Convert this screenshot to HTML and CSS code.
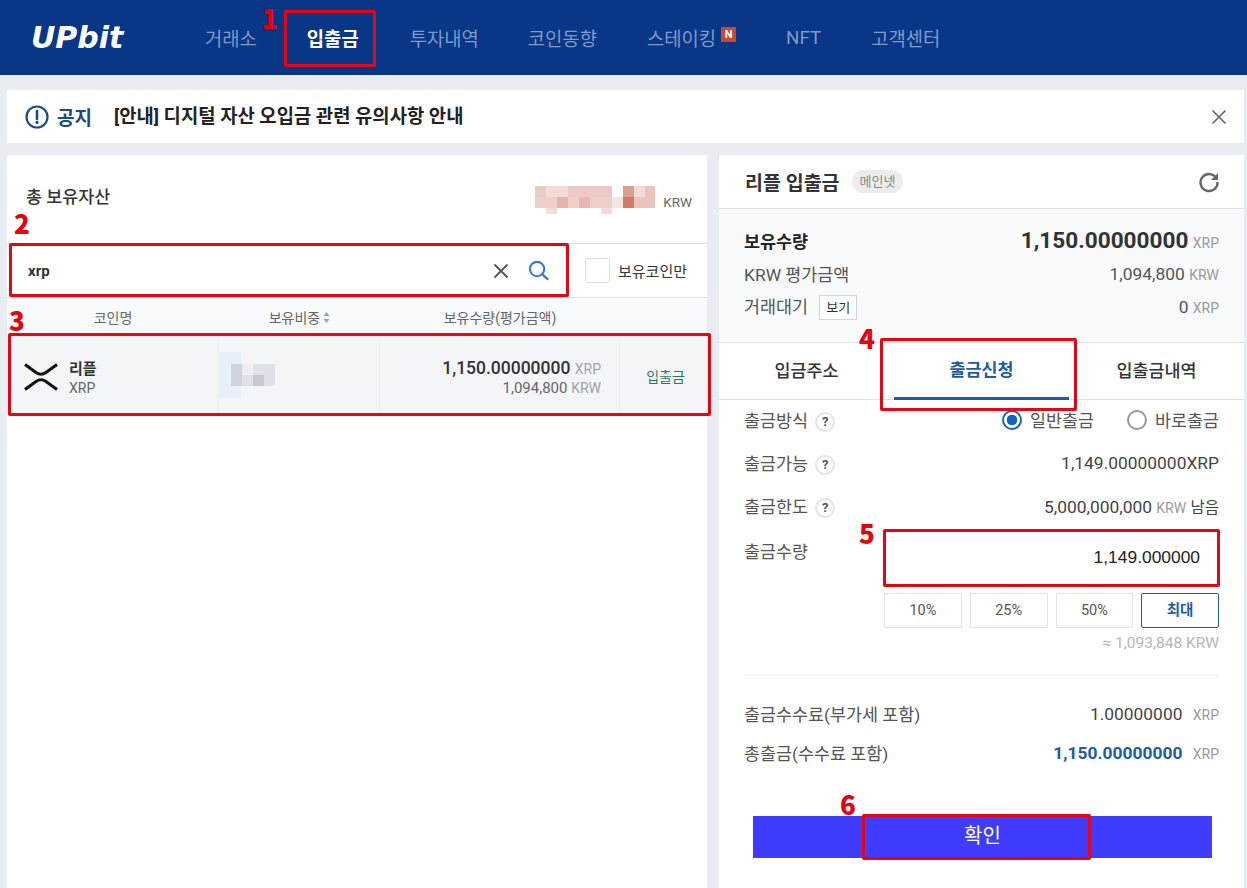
FILE: index.html
```html
<!DOCTYPE html>
<html lang="ko">
<head>
    <meta charset="UTF-8">
    <meta name="viewport" content="width=device-width, initial-scale=1.0">
    <title>업비트 출금신청</title>
    <link rel="stylesheet" href="styles.css">
</head>
<body>
    <header class="topbar">
        <div class="logo">UPbit</div>
        <nav class="nav">
            <a class="nav-item">거래소</a>
            <a class="nav-item nav-active">입출금</a>
            <a class="nav-item nav-history">투자내역</a>
            <a class="nav-item">코인동향</a>
            <a class="nav-item nav-staking">스테이킹<span class="new-badge">N</span></a>
            <a class="nav-item">NFT</a>
            <a class="nav-item">고객센터</a>
        </nav>
    </header>

    <main class="page">
        <section class="notice">
            <svg class="notice-icon" width="24" height="24" viewBox="0 0 24 24">
                <circle cx="12" cy="12" r="10.5" fill="none" stroke="#1d4a80" stroke-width="2.2"/>
                <path d="M12 6v8" stroke="#1d4a80" stroke-width="2.6" stroke-linecap="round"/>
                <circle cx="12" cy="17.4" r="1.6" fill="#1d4a80"/>
            </svg>
            <span class="notice-label">공지</span>
            <span class="notice-text">[안내] 디지털 자산 오입금 관련 유의사항 안내</span>
            <svg class="notice-close" width="16" height="16" viewBox="0 0 16 16">
                <path d="M1.5 1.5l13 13M14.5 1.5l-13 13" stroke="#666" stroke-width="1.6"/>
            </svg>
        </section>

        <div class="columns">
            <section class="panel left-panel">
                <div class="total-row">
                    <span class="total-title">총 보유자산</span>
                    <svg class="mosaic" width="120" height="28" viewBox="0 0 120 28">
                        <rect x="0" y="0" width="77" height="11" fill="#ecc9c4"/>
                        <rect x="11" y="0" width="22" height="11" fill="#f3dcd8"/>
                        <rect x="0" y="11" width="77" height="11" fill="#efcfca"/>
                        <rect x="22" y="11" width="11" height="11" fill="#e5b3ab"/>
                        <rect x="44" y="11" width="11" height="11" fill="#e6b8b0"/>
                        <rect x="77" y="11" width="11" height="11" fill="#f6e4e1"/>
                        <rect x="88" y="0" width="32" height="22" fill="#ecc4be"/>
                        <rect x="88" y="0" width="11" height="11" fill="#dd9c92"/>
                        <rect x="99" y="0" width="11" height="11" fill="#f3dcd8"/>
                        <rect x="88" y="11" width="11" height="11" fill="#cf7a6d"/>
                        <rect x="11" y="22" width="11" height="6" fill="#f3dcd8"/>
                        <rect x="66" y="22" width="11" height="6" fill="#f3dcd8"/>
                    </svg>
                    <span class="total-unit">KRW</span>
                </div>

                <div class="search-row">
                    <span class="search-text">xrp</span>
                    <svg class="search-clear" width="16" height="16" viewBox="0 0 16 16">
                        <path d="M1.5 1.5l13 13M14.5 1.5l-13 13" stroke="#555" stroke-width="1.8"/>
                    </svg>
                    <svg class="search-icon" width="21" height="21" viewBox="0 0 22 22">
                        <circle cx="9.5" cy="9.5" r="7.5" fill="none" stroke="#3a7bc8" stroke-width="2.2"/>
                        <path d="M15 15l5.5 5" stroke="#3a7bc8" stroke-width="2.4" stroke-linecap="round"/>
                    </svg>
                    <label class="only-held">
                        <span class="checkbox"></span>
                        <span>보유코인만</span>
                    </label>
                </div>

                <div class="coin-head">
                    <span class="col-name">코인명</span>
                    <span class="col-ratio">보유비중<svg class="sort" width="7" height="11" viewBox="0 0 7 11"><path d="M3.5 0l3 4h-6zM3.5 11l-3-4h6z" fill="#9aa0ac"/></svg></span>
                    <span class="col-amount">보유수량(평가금액)</span>
                </div>

                <div class="coin-row">
                    <div class="cell-name">
                        <svg class="xrp-logo" width="34" height="28" viewBox="0 0 34 28">
                            <path d="M1 1.500L12 9.500Q17 13 22 9.500L33 1.500M1 26.500L12 18.500Q17 15 22 18.500L33 26.500" fill="none" stroke="#111" stroke-width="3"/>
                        </svg>
                        <div class="coin-label">
                            <div class="coin-kr">리플</div>
                            <div class="coin-en">XRP</div>
                        </div>
                    </div>
                    <div class="cell-ratio">
                        <div class="ratio-bar"></div>
                        <svg class="mosaic-small" width="44" height="22" viewBox="0 0 44 22">
                            <rect width="44" height="22" fill="#dfe1e8"/>
                            <rect width="11" height="22" fill="#d0d3de"/>
                            <rect x="22" y="11" width="11" height="11" fill="#c6c9d4"/>
                            <rect x="11" width="11" height="11" fill="#eceef2"/>
                        </svg>
                    </div>
                    <div class="cell-amount">
                        <div class="amount-main">1,150.00000000 <span class="unit-light">XRP</span></div>
                        <div class="amount-sub">1,094,800 <span class="unit-light">KRW</span></div>
                    </div>
                    <div class="cell-action">입출금</div>
                </div>
            </section>

            <section class="panel right-panel">
                <div class="right-head">
                    <span class="right-title">리플 입출금</span>
                    <span class="net-tag">메인넷</span>
                    <svg class="refresh" width="22" height="22" viewBox="0 0 22 22">
                        <path d="M18.500 7.500A8.500 8.500 0 1 0 19.500 11" fill="none" stroke="#666" stroke-width="2.400"/>
                        <path d="M20 2v7h-7z" fill="#666"/>
                    </svg>
                </div>

                <div class="summary">
                    <div class="sum-row sum-main">
                        <span>보유수량</span>
                        <span><b class="sum-big">1,150.00000000</b> <span class="unit">XRP</span></span>
                    </div>
                    <div class="sum-row">
                        <span>KRW 평가금액</span>
                        <span class="sum-value">1,094,800 <span class="unit">KRW</span></span>
                    </div>
                    <div class="sum-row">
                        <span>거래대기 <span class="view-btn">보기</span></span>
                        <span class="sum-value">0 <span class="unit">XRP</span></span>
                    </div>
                </div>

                <div class="tabs">
                    <div class="tab">입금주소</div>
                    <div class="tab tab-active">출금신청</div>
                    <div class="tab">입출금내역</div>
                </div>

                <div class="form">
                    <div class="form-row">
                        <span class="form-label">출금방식 <span class="help">?</span></span>
                        <span class="radios">
                            <span class="radio radio-on"></span><span class="radio-text">일반출금</span>
                            <span class="radio radio-off"></span><span class="radio-text">바로출금</span>
                        </span>
                    </div>
                    <div class="form-row">
                        <span class="form-label">출금가능 <span class="help">?</span></span>
                        <span class="form-value">1,149.00000000XRP</span>
                    </div>
                    <div class="form-row">
                        <span class="form-label">출금한도 <span class="help">?</span></span>
                        <span class="form-value">5,000,000,000 <span class="unit">KRW</span> <span class="remain">남음</span></span>
                    </div>
                    <div class="amount-row">
                        <span class="form-label amount-label">출금수량</span>
                        <div class="amount-input">1,149.000000</div>
                    </div>
                    <div class="percent-row">
                        <span class="percent">10%</span>
                        <span class="percent">25%</span>
                        <span class="percent">50%</span>
                        <span class="percent percent-max">최대</span>
                    </div>
                    <div class="estimate">≈ 1,093,848 KRW</div>
                    <div class="divider"></div>
                    <div class="fee-row fee-first">
                        <span class="form-label">출금수수료(부가세 포함)</span>
                        <span class="form-value">1.00000000 <span class="unit fee-unit">XRP</span></span>
                    </div>
                    <div class="fee-row">
                        <span class="form-label">총출금(수수료 포함)</span>
                        <span class="form-value"><b class="total-blue">1,150.00000000</b> <span class="unit fee-unit">XRP</span></span>
                    </div>
                    <div class="confirm">확인</div>
                </div>
            </section>
        </div>
    </main>

    <!-- red guide marks drawn over the screenshot -->
    <div class="mark mark-1"></div>
    <div class="mark mark-2"></div>
    <div class="mark mark-3"></div>
    <div class="mark mark-4"></div>
    <div class="mark mark-5"></div>
    <div class="mark mark-6"></div>
    <span class="step step-1">1</span>
    <span class="step step-2">2</span>
    <span class="step step-3">3</span>
    <span class="step step-4">4</span>
    <span class="step step-5">5</span>
    <span class="step step-6">6</span>
</body>
</html>
```

FILE: styles.css
```css
* {
    box-sizing: border-box;
}
body {
    margin: 0;
    height: 100vh;
    overflow: hidden;
    position: relative;
    display: flex;
    flex-direction: column;
    background-color: #e9ecf1;
    color: #333;
    font-family: Roboto, "Noto Sans CJK KR", sans-serif;
}

/* top bar */
.topbar {
    height: 75px;
    flex: none;
    display: flex;
    align-items: center;
    background-color: #093687;
}
.logo {
    width: 205px;
    padding-left: 31px;
    color: #fff;
    font-family: "DejaVu Sans", sans-serif;
    font-size: 30px;
    font-weight: 700;
    font-style: italic;
}
.nav {
    display: flex;
    align-items: center;
}
.nav-item {
    margin-right: 50px;
    font-size: 18.800px;
    color: #7f9bc6;
}
.nav-active {
    margin-right: 51px;
    color: #fff;
    font-weight: 700;
}
.nav-history {
    margin-right: 49px;
}
.nav-staking {
    display: flex;
    align-items: center;
}
.new-badge {
    width: 15px;
    height: 15px;
    margin: -6px 0 0 5px;
    background-color: #c84a31;
    color: #fff;
    font-size: 11px;
    font-weight: 700;
    line-height: 15px;
    text-align: center;
}

/* page */
.page {
    flex: 1;
    min-height: 0;
    display: flex;
    flex-direction: column;
    padding: 15px 3px 0 7px;
}
.notice {
    height: 53px;
    flex: none;
    display: flex;
    align-items: center;
    padding: 0 17px 0 18px;
    background: #fff;
}
.notice-label {
    margin-left: 8px;
    width: 57px;
    color: #1d4a80;
    font-size: 19px;
    font-weight: 700;
}
.notice-text {
    flex: 1;
    color: #222;
    font-size: 18.800px;
    font-weight: 700;
    margin-top: -5px;
}
.columns {
    flex: 1;
    min-height: 0;
    display: flex;
    gap: 12px;
    margin-top: 12px;
}
.panel {
    background: #fff;
}
.left-panel {
    width: 700px;
}
.right-panel {
    width: 525px;
}

/* left panel */
.total-row {
    height: 89px;
    display: flex;
    align-items: flex-start;
    padding: 31px 15px 0 19px;
    border-bottom: 1px solid #dfe0e5;
}
.total-title {
    flex: 1;
    font-size: 17.400px;
    font-weight: 500;
    line-height: 22px;
    color: #333;
}
.total-unit {
    margin: 8px 0 0 8px;
    font-size: 13.500px;
    color: #666;
}
.search-row {
    height: 54px;
    display: flex;
    align-items: center;
    border-bottom: 1px solid #dfe0e5;
    padding-left: 21px;
}
.search-text {
    flex: 1;
    font-size: 15px;
    font-weight: 700;
    color: #333;
}
.search-clear {
    margin-right: 19px;
}
.search-icon {
    margin-right: 36px;
}
.only-held {
    display: flex;
    align-items: center;
    width: 122px;
    font-size: 15px;
    color: #333;
}
.checkbox {
    width: 25px;
    height: 25px;
    margin-right: 8px;
    border: 1px solid #dfe0e5;
    border-radius: 2px;
}
.coin-head {
    height: 37px;
    display: flex;
    align-items: center;
    background-color: #f9fafc;
    font-size: 14px;
    color: #666;
    text-align: center;
}
.col-name {
    width: 212px;
}
.col-ratio {
    width: 161px;
}
.col-amount {
    width: 240px;
}
.sort {
    margin-left: 3px;
}
.coin-row {
    height: 80px;
    display: flex;
    background-color: #f4f5f8;
}
.cell-name {
    width: 212px;
    display: flex;
    align-items: center;
    gap: 11px;
    padding: 4px 0 0 17px;
    border-right: 1px solid #eceef3;
}
.coin-label {
    margin-top: 4px;
}
.coin-kr {
    font-size: 15px;
    font-weight: 700;
    line-height: 19px;
    color: #333;
}
.coin-en {
    font-size: 14px;
    line-height: 19px;
    color: #666;
}
.cell-ratio {
    width: 161px;
    position: relative;
    display: flex;
    align-items: center;
    padding-left: 12px;
    border-right: 1px solid #eceef3;
}
.ratio-bar {
    position: absolute;
    left: 0;
    top: 17px;
    width: 22px;
    height: 46px;
    background-color: #e6f0fa;
}
.mosaic-small {
    position: relative;
}
.cell-amount {
    width: 240px;
    display: flex;
    flex-direction: column;
    justify-content: center;
    padding: 5px 18px 0 0;
    text-align: right;
    border-right: 1px solid #eceef3;
}
.amount-main {
    font-size: 17.500px;
    font-weight: 500;
    line-height: 20px;
    color: #333;
}
.amount-sub {
    font-size: 15px;
    line-height: 18px;
    color: #666;
}
.unit-light {
    font-weight: 400;
    font-size: 14px;
    color: #a0a3ab;
}
.cell-action {
    flex: 1;
    display: flex;
    align-items: center;
    justify-content: center;
    padding: 2px 0 0 4px;
    font-size: 14px;
    color: #1e7b5c;
}

/* right panel */
.right-head {
    height: 54px;
    display: flex;
    align-items: center;
    padding: 0 24px 0 26px;
    border-bottom: 1px solid #dfe0e5;
}
.right-title {
    font-size: 19.500px;
    font-weight: 700;
    color: #333;
}
.net-tag {
    margin-left: 12px;
    padding: 0 8px;
    height: 23px;
    line-height: 23px;
    border-radius: 12px;
    background-color: #ececec;
    font-size: 13px;
    color: #888;
}
.refresh {
    margin-left: auto;
}
.summary {
    height: 134px;
    padding: 15px 25px 0;
    background-color: #f9fafc;
    border-bottom: 1px solid #dfe0e5;
}
.sum-row {
    height: 33px;
    display: flex;
    align-items: center;
    justify-content: space-between;
    font-size: 17.400px;
    color: #555;
}
.sum-main {
    color: #222;
    font-weight: 700;
}
.sum-big {
    font-size: 22.600px;
    font-weight: 700;
    color: #333;
}
.sum-value {
    color: #555;
}
.unit {
    font-size: 14px;
    font-weight: 400;
    color: #999;
}
.view-btn {
    display: inline-block;
    width: 38px;
    height: 25px;
    margin-left: 7px;
    border: 1px solid #d5d6dc;
    font-size: 13px;
    line-height: 23px;
    text-align: center;
    color: #333;
    background: #fff;
    vertical-align: 1px;
}
.tabs {
    height: 57px;
    display: flex;
    border-bottom: 1px solid #dfe0e5;
}
.tab {
    flex: 1;
    display: flex;
    align-items: center;
    justify-content: center;
    padding-bottom: 4px;
    font-size: 17.400px;
    font-weight: 500;
    color: #333;
}
.tab-active {
    flex: none;
    width: 175px;
    color: #1d5ba5;
    font-weight: 700;
    border-bottom: 3px solid #1d5ba5;
    margin-bottom: -1px;
}
.form {
    padding: 0 25px;
}
.form-row {
    height: 43px;
    display: flex;
    align-items: center;
    justify-content: space-between;
    padding-bottom: 4px;
}
.form-label {
    font-size: 17.400px;
    color: #555;
}
.form-value {
    font-size: 17.400px;
    color: #444;
}
.remain {
    font-size: 15.500px;
}
.help {
    display: inline-block;
    width: 20px;
    height: 20px;
    margin-left: 3px;
    border: 2px solid #e4e4e4;
    border-radius: 50%;
    font-size: 13px;
    font-weight: 700;
    line-height: 16px;
    text-align: center;
    color: #555;
    vertical-align: 1px;
}
.radios {
    display: flex;
    align-items: center;
    font-size: 17.400px;
    color: #555;
}
.radio {
    width: 20px;
    height: 20px;
    border-radius: 50%;
    margin-right: 8px;
}
.radio-on {
    border: 2px solid #1565c0;
    background: radial-gradient(circle, #1565c0 0 5px, #fff 5.500px);
}
.radio-off {
    margin-left: 33px;
    border: 2px solid #999;
}
.amount-row {
    display: flex;
    margin-top: 1px;
}
.amount-label {
    width: 140px;
    padding-top: 8px;
}
.amount-input {
    flex: 1;
    height: 56px;
    padding-right: 19px;
    font-family: "Liberation Sans", Arial, sans-serif;
    font-size: 17.400px;
    line-height: 54px;
    text-align: right;
    color: #222;
}
.percent-row {
    display: flex;
    gap: 8px;
    margin: 7px 0 0 140px;
}
.percent {
    flex: 1;
    height: 35px;
    border: 1px solid #e2e3e7;
    font-size: 14.500px;
    line-height: 33px;
    text-align: center;
    color: #555;
}
.percent-max {
    border-color: #1d5ba5;
    border-radius: 2px;
    color: #1d5ba5;
    font-weight: 700;
}
.estimate {
    margin-top: 5px;
    height: 20px;
    font-size: 15.500px;
    line-height: 20px;
    text-align: right;
    color: #b4b6bb;
}
.divider {
    margin-top: 22px;
    border-top: 1px solid #f1f1f4;
}
.fee-row {
    height: 39px;
    display: flex;
    align-items: center;
    justify-content: space-between;
    padding-bottom: 4px;
}
.fee-first {
    margin-top: 20px;
}
.fee-unit {
    margin-left: 6px;
}
.total-blue {
    color: #1d5ba5;
    font-weight: 700;
}
.confirm {
    height: 42px;
    margin: 42px 7px 0 9px;
    background-color: #3f3cff;
    color: #fff;
    font-size: 20px;
    line-height: 40px;
    text-align: center;
}

/* guide marks */
.mark {
    position: absolute;
    border: 3px solid #e30613;
    border-radius: 2px;
}
.mark-1 { left: 284px; top: 10px; width: 92px; height: 57px; }
.mark-2 { left: 9px; top: 243px; width: 560px; height: 54px; }
.mark-3 { left: 8px; top: 333px; width: 703px; height: 83px; }
.mark-4 { left: 880px; top: 338px; width: 197px; height: 73px; }
.mark-5 { left: 883px; top: 529px; width: 337px; height: 58px; }
.mark-6 { left: 862px; top: 814px; width: 229px; height: 46px; }
.step {
    position: absolute;
    color: #e8000b;
    font-family: "Noto Sans CJK KR", sans-serif;
    font-size: 26px;
    font-weight: 900;
    line-height: 24px;
}
.step-1 { left: 262px; top: 6px; }
.step-2 { left: 14px; top: 211px; }
.step-3 { left: 9px; top: 308px; }
.step-4 { left: 859px; top: 326px; }
.step-5 { left: 859px; top: 521px; }
.step-6 { left: 840px; top: 792px; }
```
